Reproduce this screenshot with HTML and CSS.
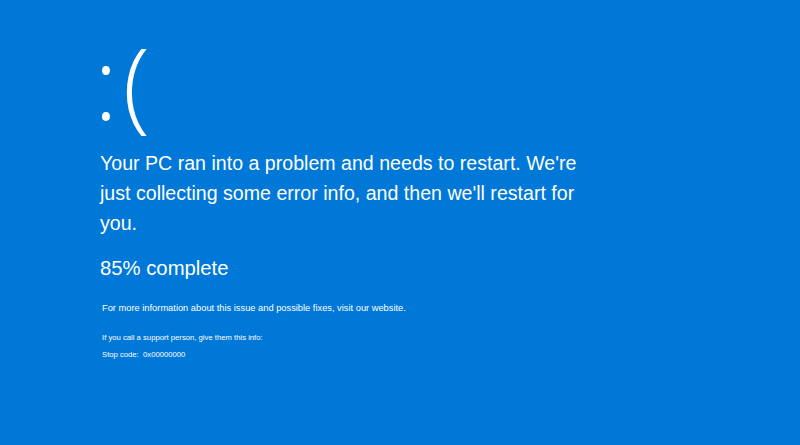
FILE: index.html
```html
<!DOCTYPE html>
<html lang="en">
<head>
    <meta charset="UTF-8">
    <title>Stop error</title>
    <link rel="stylesheet" href="styles.css">
</head>
<body>
    <div class="screen">
        <div class="face">:(</div>
        <p class="message">Your PC ran into a problem and needs to restart. We're just collecting some error info, and then we'll restart for you.</p>
        <p class="progress">85% complete</p>
        <p class="more">For more information about this issue and possible fixes, visit our website.</p>
        <p class="support">If you call a support person, give them this info:</p>
        <p class="support">Stop code:&nbsp; 0x00000000</p>
    </div>
</body>
</html>
```

FILE: styles.css
```css
html, body {
    margin: 0;
    padding: 0;
    height: 100%;
}
body {
    background-color: #0078d7;
    color: #fff;
    font-family: "Liberation Sans", Arial, sans-serif;
}
.screen {
    padding: 26px 0 0 100px;
}
.face {
    font-family: "Open Sans", sans-serif;
    font-weight: 300;
    font-size: 100px;
    line-height: 110px;
    letter-spacing: 5px;
    margin: 0 0 12px -6px;
}
p {
    margin: 0;
}
.message {
    width: 500px;
    font-size: 19.6px;
    line-height: 30px;
    margin-top: 2px;
}
.progress {
    font-size: 20.3px;
    line-height: 30px;
    margin-top: 15px;
}
.more {
    font-size: 9.3px;
    line-height: 12px;
    margin-top: 19px;
    padding-left: 2px;
}
.support {
    font-size: 7.7px;
    line-height: 17px;
    padding-left: 2px;
}
.more + .support {
    margin-top: 15px;
}
```
